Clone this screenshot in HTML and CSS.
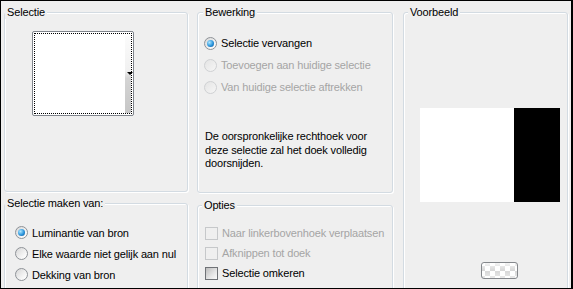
FILE: index.html
```html
<!DOCTYPE html>
<html lang="nl">
<head>
    <meta charset="UTF-8">
    <title>Selectie uit masker</title>
    <link rel="stylesheet" href="styles.css">
</head>
<body>
    <div class="dialog">
        <div class="col col-left">
            <fieldset class="group group-selectie">
                <legend>Selectie</legend>
                <div class="swatch">
                    <span class="swatch-strip"><span class="swatch-arrow"></span></span>
                </div>
            </fieldset>
            <fieldset class="group group-bron">
                <legend>Selectie maken van:</legend>
                <div class="opt"><span class="radio checked"></span>Luminantie van bron</div>
                <div class="opt"><span class="radio"></span>Elke waarde niet gelijk aan nul</div>
                <div class="opt"><span class="radio"></span>Dekking van bron</div>
            </fieldset>
        </div>

        <div class="col col-mid">
            <fieldset class="group group-bewerking">
                <legend>Bewerking</legend>
                <div class="opt"><span class="radio checked"></span>Selectie vervangen</div>
                <div class="opt disabled"><span class="radio"></span>Toevoegen aan huidige selectie</div>
                <div class="opt disabled"><span class="radio"></span>Van huidige selectie aftrekken</div>
                <p class="note">De oorspronkelijke rechthoek voor<br>deze selectie zal het doek volledig<br>doorsnijden.</p>
            </fieldset>
            <fieldset class="group group-opties">
                <legend>Opties</legend>
                <div class="opt disabled"><span class="check"></span>Naar linkerbovenhoek verplaatsen</div>
                <div class="opt disabled"><span class="check"></span>Afknippen tot doek</div>
                <div class="opt"><span class="check"></span>Selectie omkeren</div>
            </fieldset>
        </div>

        <div class="col col-right">
            <fieldset class="group group-voorbeeld">
                <legend>Voorbeeld</legend>
                <div class="preview">
                    <div class="preview-white"></div>
                    <div class="preview-black"></div>
                </div>
                <button class="bg-btn" title="Achtergrond"></button>
            </fieldset>
        </div>
    </div>
</body>
</html>
```

FILE: styles.css
```css
body {
    margin: 0;
    background-color: #efefef;
    font-family: "Liberation Sans", Arial, sans-serif;
    font-size: 11px;
    letter-spacing: -0.15px;
    color: #000;
}
.dialog {
    width: 573px;
    height: 289px;
    box-sizing: border-box;
    border: 1px solid #000;
    border-right-width: 2px;
    padding: 5px 0 0 3px;
    display: flex;
    align-items: flex-start;
    overflow: hidden;
    background-color: #efefef;
}
.col {
    display: flex;
    flex-direction: column;
    flex: none;
}
.col-left {
    width: 184px;
}
.col-mid {
    width: 196px;
    margin-left: 9px;
}
.col-right {
    width: 165px;
    margin-left: 10px;
}
.group {
    flex: none;
    margin: 0;
    padding: 0;
    min-width: 0;
    border: 1px solid #d3dbe2;
    border-radius: 3px;
    box-sizing: border-box;
    box-shadow: 1px 1px 0 #fff, inset 1px 1px 0 #fff;
}
.group legend {
    padding: 0 2px;
    margin-left: 0;
    line-height: 13px;
    background-color: #efefef;
}
.group-selectie {
    height: 186px;
}
.group-bron {
    margin-top: 5px;
    height: 120px;
}
.group-bewerking {
    height: 187px;
}
.group-bewerking legend {
    margin-left: 5px;
}
.group-opties {
    margin-top: 6px;
    height: 120px;
}
.group-opties legend {
    margin-left: 4px;
}
.group-voorbeeld {
    height: 300px;
}
.group-voorbeeld legend {
    margin-left: 4px;
}

/* selectie swatch */
.swatch {
    width: 102px;
    height: 85px;
    margin: 12px 0 0 27px;
    box-sizing: border-box;
    border: 1px solid #80858c;
    border-radius: 2px;
    background-color: #fff;
    padding: 1px;
}
.swatch-strip {
    display: block;
    width: 100%;
    height: 100%;
    box-sizing: border-box;
    border: 1px dotted #000;
    background-image: linear-gradient(#fbfbfb, #f1f1f1 45%, #d4d4d4 55%, #c6c6c6);
    background-size: 6px 77px;
    background-position: 90px 2px;
    background-repeat: no-repeat;
    position: relative;
}
.swatch-arrow {
    position: absolute;
    left: 92px;
    top: 38px;
    width: 0;
    height: 0;
    border-left: 3px solid transparent;
    border-right: 3px solid transparent;
    border-top: 3px solid #000;
}

/* options */
.opt {
    display: flex;
    align-items: center;
    height: 22px;
    white-space: nowrap;
}
.opt.disabled {
    color: #a5a5a5;
}
.group-bewerking .opt {
    padding-left: 6px;
}
.group-bewerking .opt:first-of-type {
    margin-top: 13px;
}
.group-bron .opt {
    height: 21px;
    padding-left: 10px;
}
.group-bron .opt:first-of-type {
    margin-top: 12px;
}
.group-opties .opt {
    height: 20px;
    padding-left: 7px;
}
.group-opties .opt:first-of-type {
    margin-top: 11px;
}

.radio {
    flex: none;
    width: 13px;
    height: 13px;
    margin-right: 4px;
    box-sizing: border-box;
    border-radius: 50%;
    border: 1px solid #8e9297;
    background: linear-gradient(135deg, #d6d6d6, #f7f7f7 70%, #fff);
    display: flex;
    align-items: center;
    justify-content: center;
}
.radio.checked::after {
    content: "";
    width: 7px;
    height: 7px;
    border-radius: 50%;
    background: radial-gradient(circle at 35% 35%, #aee6ff, #2a95dc 55%, #0b4c8c);
}
.opt.disabled .radio {
    border-color: #cfd1d3;
    background: linear-gradient(135deg, #e4e4e4, #f6f6f6);
}

.check {
    flex: none;
    width: 13px;
    height: 13px;
    margin-right: 4px;
    box-sizing: border-box;
    border: 1px solid #6f7276;
    background: linear-gradient(135deg, #bdbdbd, #e6e6e6 60%, #fafafa);
}
.opt.disabled .check {
    border-color: #c6c8ca;
    background: #efefef;
}

.note {
    margin: 32px 0 0 7px;
    line-height: 13.5px;
}

/* voorbeeld */
.preview {
    display: flex;
    width: 140px;
    height: 94px;
    margin: 89px 0 0 16px;
}
.preview-white {
    width: 94px;
    background-color: #fff;
}
.preview-black {
    width: 46px;
    background-color: #000;
}
.bg-btn {
    display: block;
    width: 37px;
    height: 17px;
    margin: 60px 0 0 77px;
    padding: 0;
    border: 1px solid #85888c;
    border-radius: 3px;
    background:
        linear-gradient(rgba(255, 255, 255, 0.75), rgba(255, 255, 255, 0.1) 50%, rgba(255, 255, 255, 0.5)),
        conic-gradient(#d2d2d2 25%, #fff 0 50%, #d2d2d2 0 75%, #fff 0) 3px 3px / 10px 10px;
}
```
